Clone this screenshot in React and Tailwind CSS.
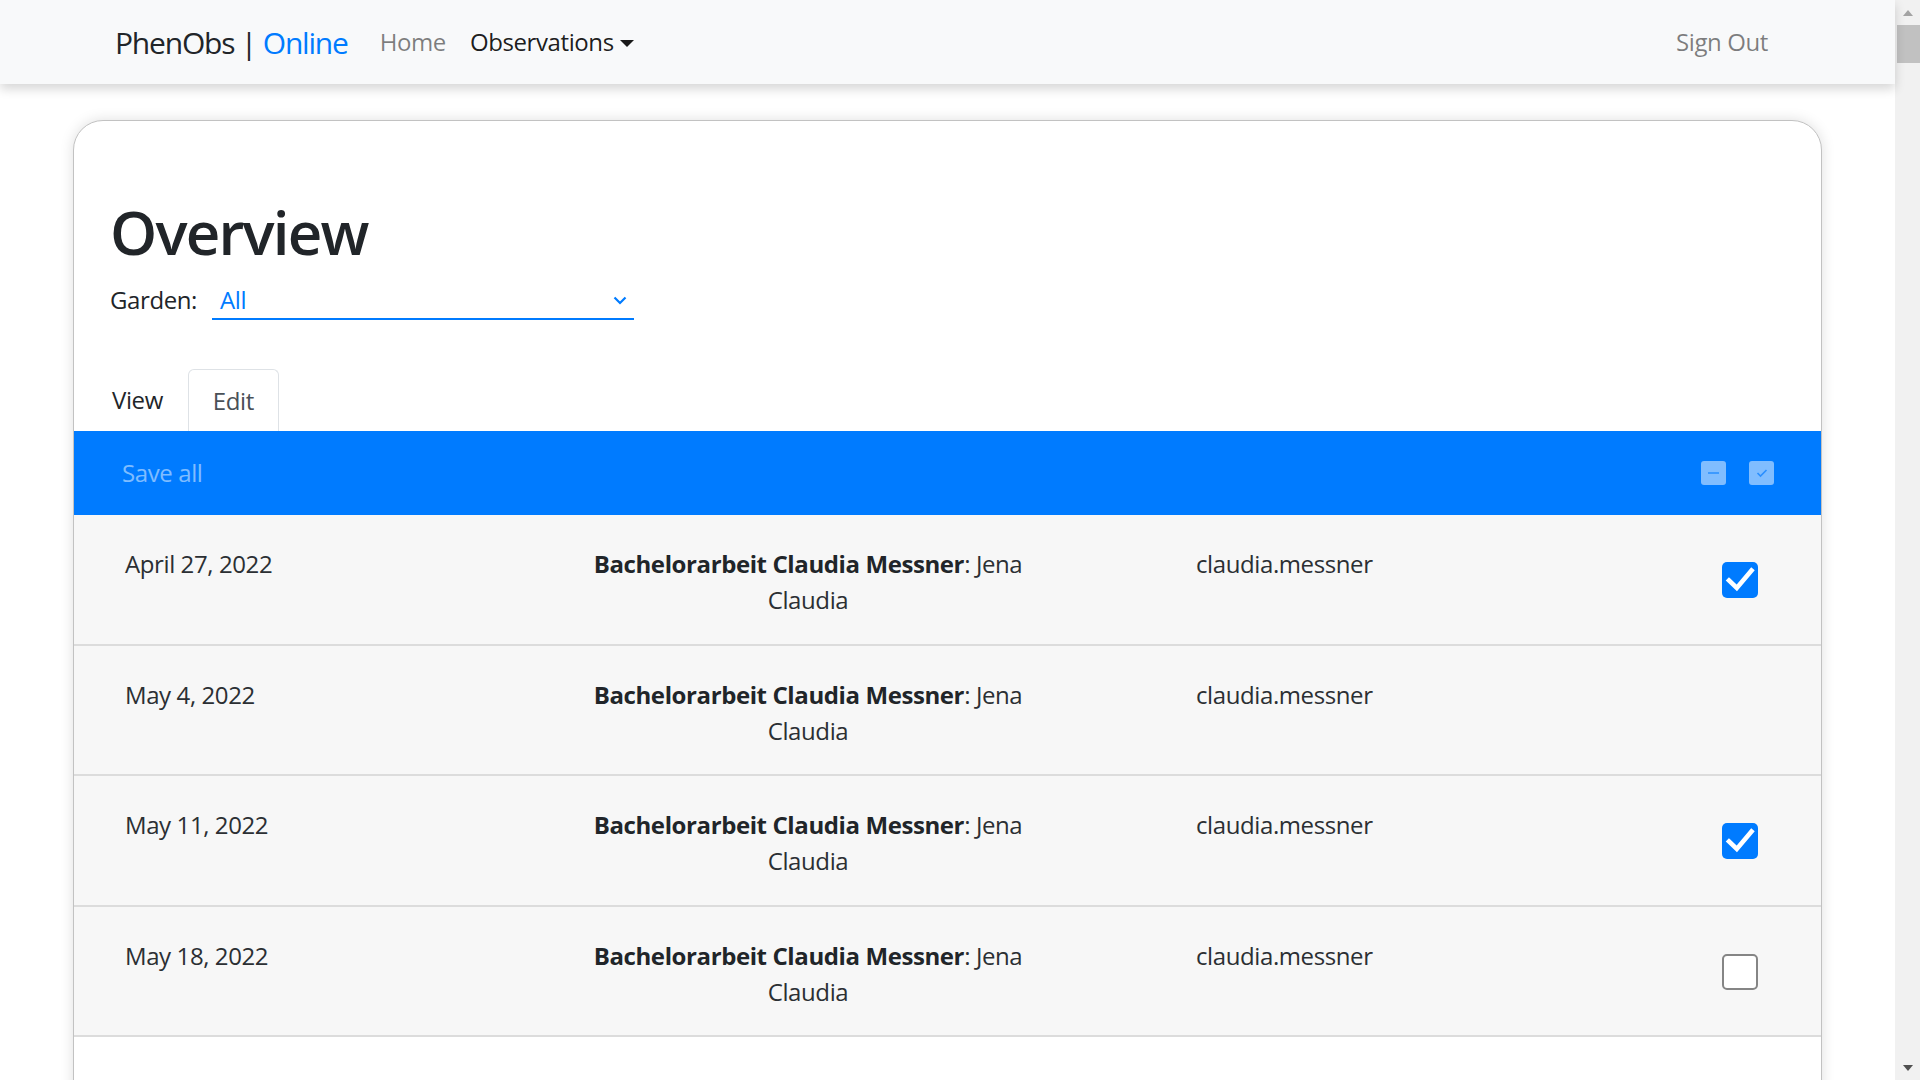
import { useState } from "react";

const rows = [
  { date: "April 27, 2022", garden: "Bachelorarbeit Claudia Messner", site: "Jena Claudia", user: "claudia.messner", state: "checked" },
  { date: "May 4, 2022", garden: "Bachelorarbeit Claudia Messner", site: "Jena Claudia", user: "claudia.messner", state: "none" },
  { date: "May 11, 2022", garden: "Bachelorarbeit Claudia Messner", site: "Jena Claudia", user: "claudia.messner", state: "checked" },
  { date: "May 18, 2022", garden: "Bachelorarbeit Claudia Messner", site: "Jena Claudia", user: "claudia.messner", state: "unchecked" },
];

function CheckMark({ className }) {
  return (
    <svg viewBox="0 0 36 36" className={className} fill="none">
      <polyline points="7,18.5 14.8,26 29.5,8.5" stroke="currentColor" strokeWidth="4.6" strokeLinecap="square" />
    </svg>
  );
}

function RowCheckbox({ state }) {
  const [on, setOn] = useState(state === "checked");
  if (state === "none") return <div className="w-[36px] h-[36px]" />;
  return (
    <button
      type="button"
      onClick={() => setOn(!on)}
      className={
        on
          ? "w-[36px] h-[36px] rounded-[5px] bg-[#007bff] text-white flex items-center justify-center"
          : "w-[36px] h-[36px] rounded-[5px] bg-white border-2 border-[#858585]"
      }
    >
      {on && <CheckMark className="w-[36px] h-[36px]" />}
    </button>
  );
}

function Navbar() {
  return (
    <nav className="relative z-10 h-[84px] shrink-0 bg-[#f8f9fa] shadow-[0_5px_10px_rgba(0,0,0,0.16)] flex items-center px-[115px]">
      <div className="text-[30px] leading-[45px] text-[#212529] mr-[20px] tracking-[-0.04em]">
        PhenObs | <span className="text-[#007bff]">Online</span>
      </div>
      <a className="px-[12px] text-[24px] leading-[36px] text-black/50">Home</a>
      <a className="px-[12px] text-[24px] leading-[36px] text-black/90 flex items-center">
        Observations
        <span className="ml-[6px] mt-[2px] w-0 h-0 border-x-[7px] border-x-transparent border-t-[7px] border-t-black/90" />
      </a>
      <a className="ml-auto px-[12px] text-[24px] leading-[36px] text-black/50">Sign Out</a>
    </nav>
  );
}

function Scrollbar() {
  return (
    <div className="w-[25px] shrink-0 bg-[#f1f1f1] flex flex-col items-stretch">
      <div className="h-[25px] flex items-center justify-center">
        <span className="w-0 h-0 border-x-[5px] border-x-transparent border-b-[6px] border-b-[#a3a3a3]" />
      </div>
      <div className="ml-[2px] h-[38px] bg-[#c1c1c1]" />
      <div className="flex-1" />
      <div className="h-[25px] flex items-center justify-center">
        <span className="w-0 h-0 border-x-[5px] border-x-transparent border-t-[6px] border-t-[#505050]" />
      </div>
    </div>
  );
}

export default function App() {
  const [tab, setTab] = useState("view");
  return (
    <div className="h-screen w-full flex overflow-hidden bg-white font-['Open_Sans','Noto_Sans',sans-serif] text-[#212529] tracking-[-0.025em]">
      <div className="flex-1 min-w-0 flex flex-col">
        <Navbar />
        <main className="flex-1 min-h-0 px-[73px] pt-[36px]">
          <div className="rounded-[30px] border border-[#c2c2c2] bg-white shadow-[0_0_14px_rgba(0,0,0,0.13)] overflow-hidden">
            <div className="px-[36px] pt-[75px]">
              <h1 className="text-[60px] leading-[72px] font-semibold tracking-[-0.03em]">Overview</h1>
              <div className="mt-[14px] flex items-start text-[24px] leading-[36px]">
                <span>Garden:</span>
                <div className="ml-[15px] w-[422px] flex items-center border-b-2 border-[#007bff] pl-[8px] pr-[7px]">
                  <span className="flex-1 text-[#007bff]">All</span>
                  <svg viewBox="0 0 14 9" className="w-[14px] h-[9px] text-[#007bff]" fill="none">
                    <polyline points="1.5,1.5 7,7 12.5,1.5" stroke="currentColor" strokeWidth="2.2" />
                  </svg>
                </div>
              </div>
            </div>
            <div className="pl-[13px] mt-[49px] flex text-[24px] leading-[36px]">
              <button
                type="button"
                onClick={() => setTab("view")}
                className="px-[24px] py-[12px] border border-transparent text-[#212529]"
              >
                View
              </button>
              <button
                type="button"
                onClick={() => setTab("edit")}
                className="px-[24px] py-[12px] border border-b-0 border-[#dee2e6] rounded-t-[6px] text-[#495057]"
              >
                Edit
              </button>
            </div>
            <div className="h-[84px] bg-[#007bff] flex items-center pl-[30px] pr-[47px]">
              <button type="button" className="px-[18px] py-[9px] text-[24px] leading-[36px] text-white/50">
                Save all
              </button>
              <div className="ml-auto flex gap-[23px]">
                <div className="w-[25px] h-[24px] rounded-[3px] bg-[#80bdff] flex items-center justify-center">
                  <span className="w-[11px] h-[2px] bg-[#3d9aff]" />
                </div>
                <div className="w-[25px] h-[24px] rounded-[3px] bg-[#80bdff] flex items-center justify-center text-[#2a8fff]">
                  <svg viewBox="0 0 12 10" className="w-[12px] h-[10px]" fill="none">
                    <polyline points="1.5,5 4.5,8 10.5,2" stroke="currentColor" strokeWidth="1.6" />
                  </svg>
                </div>
              </div>
            </div>
            {rows.map((r) => {
              const [first, ...rest] = r.site.split(" ");
              return (
                <div
                  key={r.date}
                  className="flex items-start bg-[#f7f7f7] border-b-2 border-[#dcdcdc] pl-[51px] pr-[63px] pt-[31px] pb-[25.5px] text-[24px] leading-[36px] text-[#2b2f33]"
                >
                  <div className="w-[448px] shrink-0">{r.date}</div>
                  <div className="w-[470px] shrink-0 text-center">
                    <span className="font-bold text-[#212529]">{r.garden}</span>
                    <span>: {first}</span> <span>{rest.join(" ")}</span>
                  </div>
                  <div className="flex-1 ml-[153px]">{r.user}</div>
                  <div className="mt-[16px]">
                    <RowCheckbox state={r.state} />
                  </div>
                </div>
              );
            })}
            <div className="h-[220px] bg-white" />
          </div>
        </main>
      </div>
      <Scrollbar />
    </div>
  );
}
